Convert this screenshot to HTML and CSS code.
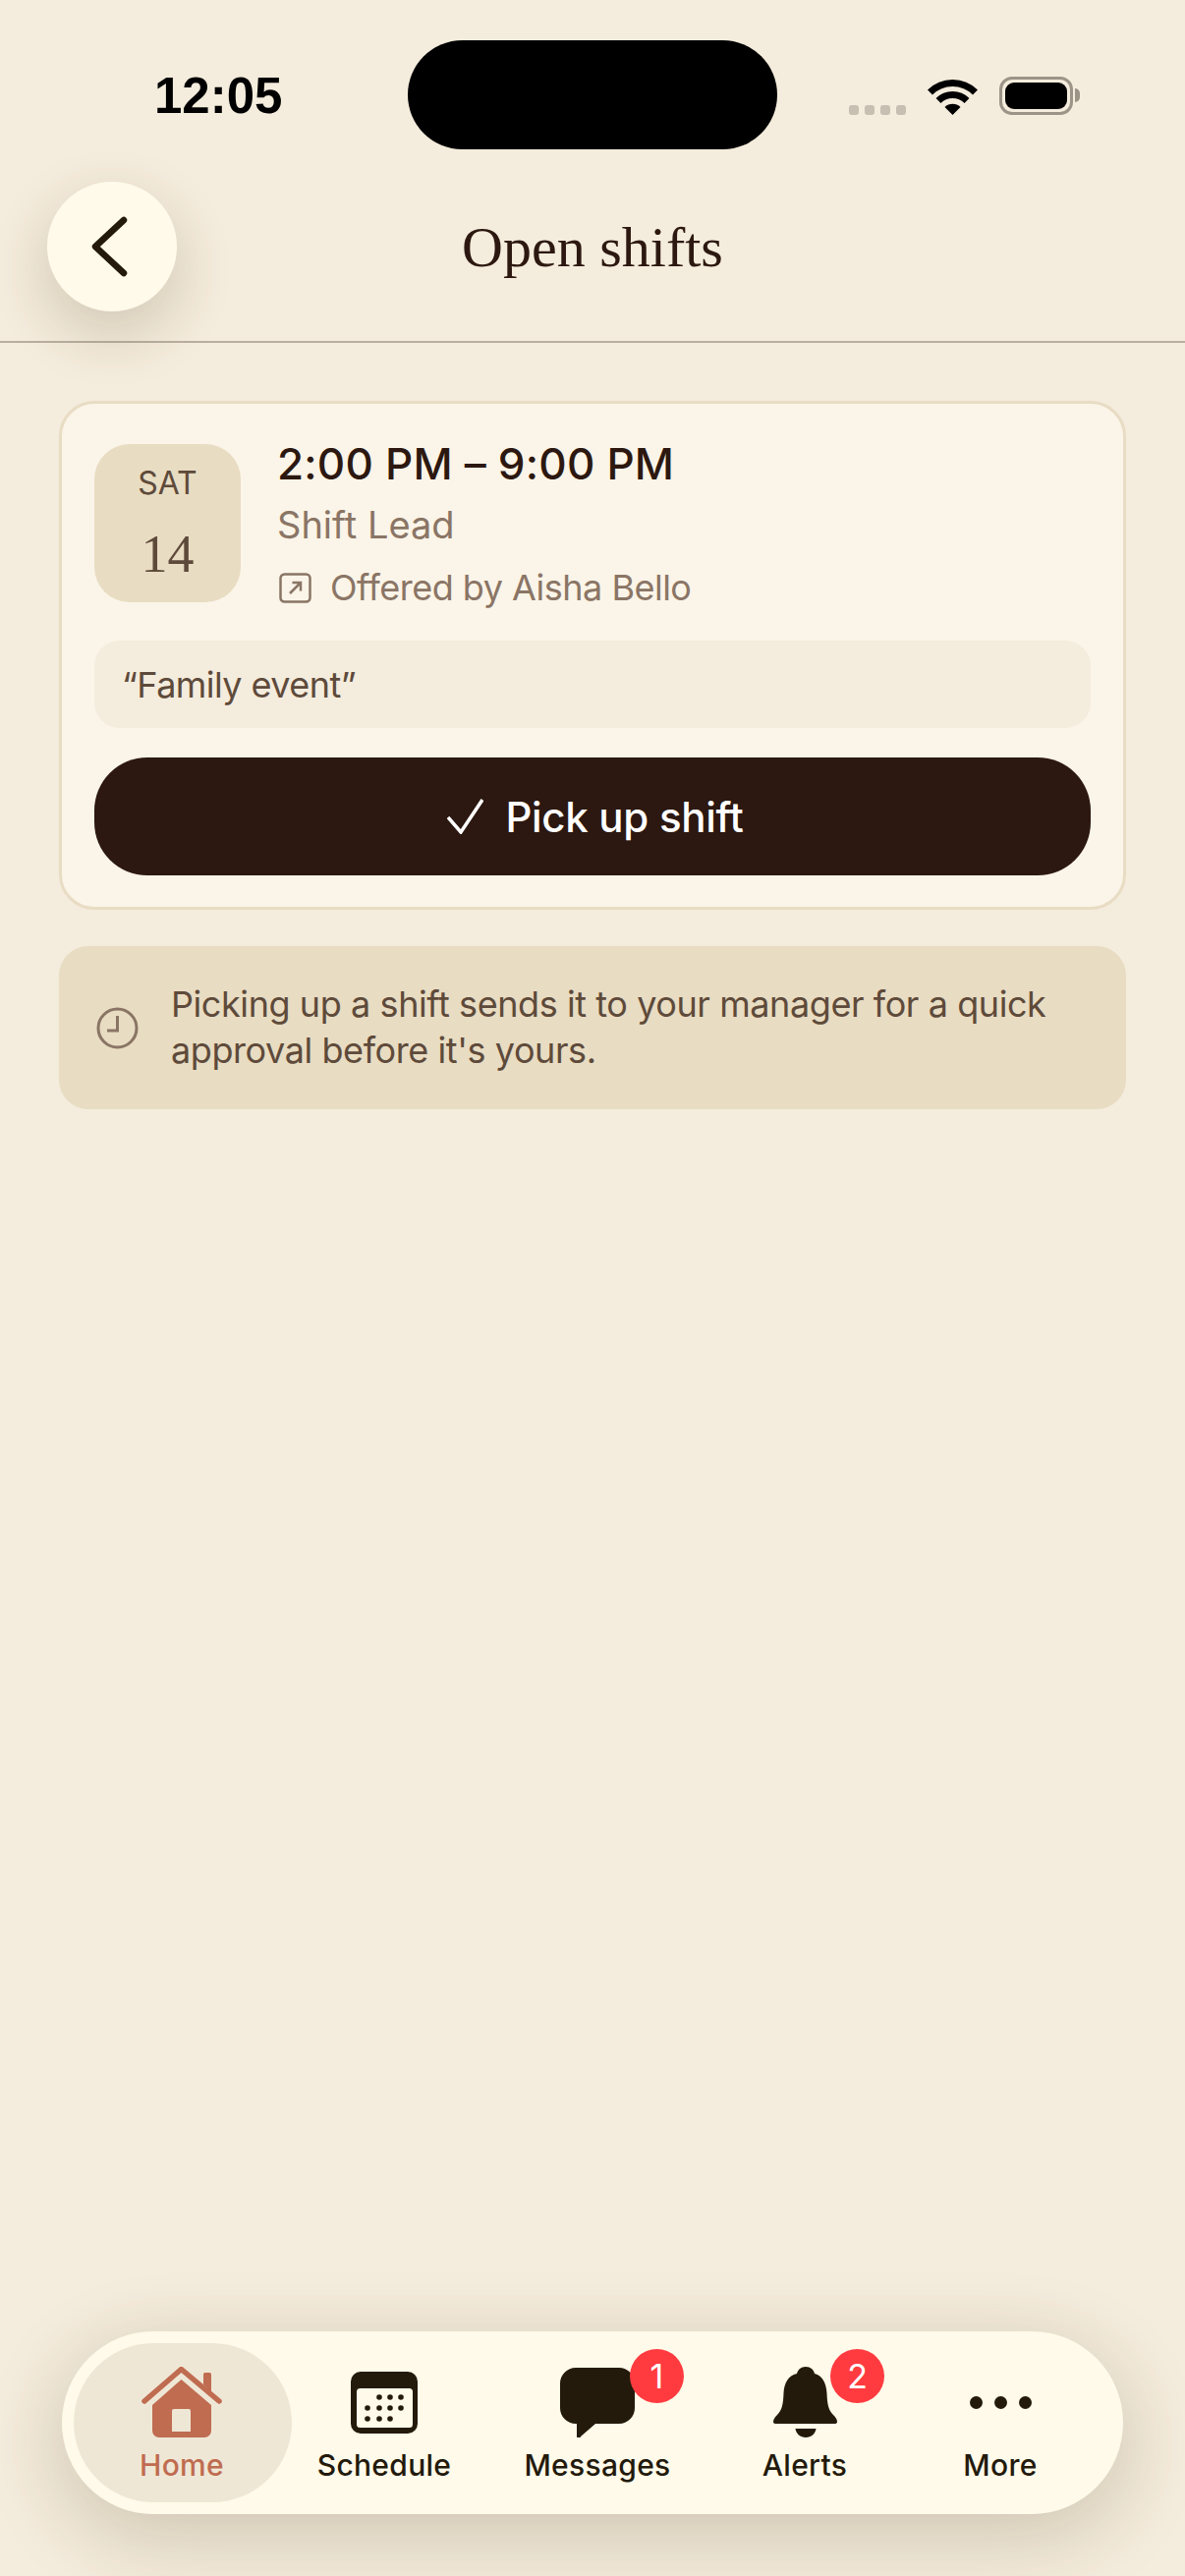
FILE: index.html
```html
<!DOCTYPE html>
<html lang="en">
<head>
    <meta charset="UTF-8">
    <meta name="viewport" content="width=device-width, initial-scale=1.0">
    <title>Open shifts</title>
    <link rel="stylesheet" href="styles.css">
</head>
<body>
    <div class="island"></div>

    <!-- Status bar -->
    <div class="status-bar">
        <span class="clock">12:05</span>
        <div class="status-icons">
            <div class="signal"><i></i><i></i><i></i><i></i></div>
            <svg class="wifi" width="51" height="37" viewBox="0 0 51 37">
                <path d="M2.5 14 A32.5 32.5 0 0 1 48.5 14" fill="none" stroke="#000" stroke-width="7"/>
                <path d="M11 22.5 A20.5 20.5 0 0 1 40 22.5" fill="none" stroke="#000" stroke-width="7"/>
                <path d="M25.5 37 L17.5 29 A11.5 11.5 0 0 1 33.5 29 Z" fill="#000"/>
            </svg>
            <div class="battery"><div class="battery-fill"></div></div>
        </div>
    </div>

    <!-- Header -->
    <header class="header">
        <button class="back-btn" aria-label="Back">
            <svg width="44" height="64" viewBox="0 0 44 64">
                <polyline points="34,5 5,32 34,59" fill="none" stroke="#231a0c" stroke-width="6.5" stroke-linecap="round" stroke-linejoin="round"/>
            </svg>
        </button>
        <h1>Open shifts</h1>
    </header>

    <main class="content">
        <section class="shift-card">
            <div class="shift-top">
                <div class="date-box">
                    <span class="date-day">SAT</span>
                    <span class="date-num">14</span>
                </div>
                <div class="shift-info">
                    <div class="shift-time">2:00 PM – 9:00 PM</div>
                    <div class="shift-role">Shift Lead</div>
                    <div class="shift-offer">
                        <svg width="33" height="31" viewBox="0 0 33 31">
                            <rect x="1.5" y="1.5" width="30" height="28" rx="4" fill="none" stroke="#8a7565" stroke-width="2.5"/>
                            <path d="M11 21 L22 10 M13.5 10 H22 V18.5" fill="none" stroke="#8a7565" stroke-width="2.5"/>
                        </svg>
                        <span>Offered by Aisha Bello</span>
                    </div>
                </div>
            </div>
            <div class="shift-note">“Family event”</div>
            <button class="pickup-btn">
                <svg width="37" height="36" viewBox="0 0 37 36">
                    <polyline points="1,19 14,34 36,1" fill="none" stroke="#fff" stroke-width="3.5"/>
                </svg>
                <span>Pick up shift</span>
            </button>
        </section>

        <section class="info-box">
            <svg class="info-icon" width="43" height="43" viewBox="0 0 43 43">
                <circle cx="21.5" cy="21.5" r="19.5" fill="none" stroke="#8a7565" stroke-width="3"/>
                <path d="M21.5 9 V24 H11" fill="none" stroke="#8a7565" stroke-width="3"/>
            </svg>
            <p>Picking up a shift sends it to your manager for a quick approval before it's yours.</p>
        </section>
    </main>

    <!-- Tab bar -->
    <nav class="tab-bar">
        <div class="tab active">
            <div class="tab-icon">
                <svg width="82" height="72" viewBox="0 0 82 72">
                    <path d="M63 7.5 a1.5 1.5 0 0 1 1.5 -1.5 h5 a1.5 1.5 0 0 1 1.5 1.5 V26 L63 18 Z" fill="#bf6c50"/>
                    <path d="M3 35 L40.5 2.5 L79 35" fill="none" stroke="#bf6c50" stroke-width="5.5" stroke-linecap="round" stroke-linejoin="round"/>
                    <path d="M40.5 13 L71 39 V65 a7 7 0 0 1 -7 7 H18 a7 7 0 0 1 -7 -7 V39 Z" fill="#bf6c50"/>
                    <path d="M31 45 a2 2 0 0 1 2 -2 h15 a2 2 0 0 1 2 2 V66 H31 Z" fill="#efe7d6"/>
                </svg>
            </div>
            <span class="tab-label">Home</span>
        </div>
        <div class="tab">
            <div class="tab-icon">
                <svg width="68" height="63" viewBox="0 0 68 63">
                    <rect width="68" height="63" rx="10" fill="#231a0c"/>
                    <rect x="6" y="17" width="57" height="40" rx="3.5" fill="#fffaea"/>
                    <g fill="#231a0c">
                        <circle cx="29" cy="26" r="2.8"/><circle cx="40" cy="26" r="2.8"/><circle cx="51" cy="26" r="2.8"/>
                        <circle cx="17" cy="37" r="2.8"/><circle cx="29" cy="37" r="2.8"/><circle cx="40" cy="37" r="2.8"/><circle cx="51" cy="37" r="2.8"/>
                        <circle cx="17" cy="48" r="2.8"/><circle cx="29" cy="48" r="2.8"/><circle cx="40" cy="48" r="2.8"/>
                    </g>
                </svg>
            </div>
            <span class="tab-label">Schedule</span>
        </div>
        <div class="tab">
            <div class="tab-icon">
                <svg width="76" height="71" viewBox="0 0 76 71">
                    <path d="M16 0 H60 a16 16 0 0 1 16 16 V41 a16 16 0 0 1 -16 16 H36 L21 70 a2 2 0 0 1 -4 -1 V57 H16 a16 16 0 0 1 -16 -16 V16 a16 16 0 0 1 16 -16 Z" fill="#231a0c"/>
                </svg>
            </div>
            <span class="tab-label">Messages</span>
            <span class="badge badge-messages">1</span>
        </div>
        <div class="tab">
            <div class="tab-icon">
                <svg width="65" height="72" viewBox="0 0 65 72">
                    <path d="M33 0 C28 0 25 3 24 7 C15 9 11 17 10.5 27 C10 38 9 44 4 49 C1 52 0 54 0 56 C0 57.5 1 58 3 58 H62 C64 58 65 57.5 65 56 C65 54 64 52 61 49 C56 44 55 38 54.5 27 C54 17 50 9 42 7 C41 3 38 0 33 0 Z" fill="#231a0c"/>
                    <path d="M22.5 63 H43.5 C43 68 38.5 72 33 72 C27.5 72 23 68 22.5 63 Z" fill="#231a0c"/>
                </svg>
            </div>
            <span class="tab-label">Alerts</span>
            <span class="badge badge-alerts">2</span>
        </div>
        <div class="tab">
            <div class="tab-icon">
                <svg width="63" height="15" viewBox="0 0 63 15">
                    <circle cx="6.5" cy="7.5" r="6.5" fill="#231a0c"/>
                    <circle cx="31.5" cy="7.5" r="6.5" fill="#231a0c"/>
                    <circle cx="56.5" cy="7.5" r="6.5" fill="#231a0c"/>
                </svg>
            </div>
            <span class="tab-label">More</span>
        </div>
    </nav>
</body>
</html>
```

FILE: styles.css
```css
/* Global Styles */
* {
    box-sizing: border-box;
}

body {
    margin: 0;
    width: 1206px;
    height: 2622px;
    overflow: hidden;
    position: relative;
    display: flex;
    flex-direction: column;
    background-color: #f4ecdc;
    font-family: Inter, "Noto Sans", sans-serif;
    color: #2c1810;
}

/* Status Bar */
.island {
    position: absolute;
    left: 415px;
    top: 41px;
    width: 376px;
    height: 111px;
    border-radius: 56px;
    background-color: #000;
}

.status-bar {
    height: 156px;
    padding: 69px 114px 0 157px;
    display: flex;
    justify-content: space-between;
    align-items: flex-start;
}

.clock {
    font-family: "Liberation Sans", sans-serif;
    font-weight: 700;
    font-size: 51px;
    line-height: 58px;
    color: #000;
}

.status-icons {
    display: flex;
    align-items: flex-end;
    margin-top: 9px;
}

.signal {
    display: flex;
    gap: 6px;
    margin-right: 22px;
}

.signal i {
    width: 10px;
    height: 10px;
    border-radius: 3px;
    background-color: #c6bfb2;
}

.battery {
    width: 75px;
    height: 39px;
    margin-left: 22px;
    padding: 3px;
    border: 3px solid #9b9487;
    border-radius: 13px;
    position: relative;
}

.battery::after {
    content: "";
    position: absolute;
    right: -10px;
    top: 9px;
    width: 5px;
    height: 14px;
    border-radius: 0 5px 5px 0;
    background-color: #9b9487;
}

.battery-fill {
    width: 100%;
    height: 100%;
    border-radius: 9px;
    background-color: #000;
}

/* Header */
.header {
    height: 193px;
    padding-left: 48px;
    padding-bottom: 1px;
    display: flex;
    align-items: center;
    position: relative;
    border-bottom: 2px solid #b9afa0;
}

.back-btn {
    width: 132px;
    height: 132px;
    padding: 0;
    border: none;
    border-radius: 50%;
    background-color: #fffaea;
    box-shadow: 0 22px 60px rgba(70, 50, 25, 0.2);
    display: flex;
    align-items: center;
    justify-content: center;
}

.header h1 {
    margin: 0;
    position: absolute;
    left: 0;
    right: 0;
    top: 60px;
    text-align: center;
    font-family: "Liberation Serif", serif;
    font-weight: 400;
    font-size: 58px;
    line-height: 72px;
    color: #2c1810;
}

/* Content */
.content {
    flex: 1;
    padding: 59px 60px 0;
}

.shift-card {
    height: 518px;
    padding: 41px 33px 0;
    border: 3px solid #e8dcc4;
    border-radius: 36px;
    background-color: #fbf4e8;
}

.shift-top {
    height: 161px;
    display: flex;
    gap: 37px;
}

.date-box {
    width: 149px;
    height: 161px;
    border-radius: 36px;
    background-color: #e8dcc2;
    display: flex;
    flex-direction: column;
    align-items: center;
    padding-top: 18px;
}

.date-day {
    font-size: 32px;
    line-height: 44px;
    color: #5e4a3a;
}

.date-num {
    margin-top: 14px;
    font-family: "Liberation Serif", serif;
    font-size: 54px;
    line-height: 72px;
    color: #5e4a3a;
}

.shift-info {
    display: flex;
    flex-direction: column;
    margin-top: -5px;
}

.shift-time {
    font-size: 44px;
    font-weight: 500;
    line-height: 50px;
    letter-spacing: 0.2px;
    color: #2c1810;
}

.shift-role {
    font-size: 38px;
    line-height: 46px;
    margin-top: 14px;
    color: #8a7565;
}

.shift-offer {
    display: flex;
    align-items: center;
    gap: 19px;
    margin-top: 19px;
    font-size: 36px;
    line-height: 44px;
    letter-spacing: -0.5px;
    color: #8a7565;
}

.shift-offer svg {
    margin-left: 2px;
}

.shift-note {
    height: 89px;
    margin-top: 39px;
    padding-left: 28px;
    display: flex;
    align-items: center;
    border-radius: 26px;
    background-color: #f4ecdd;
    font-size: 36px;
    letter-spacing: -0.55px;
    color: #5e4a3a;
}

.pickup-btn {
    width: 100%;
    height: 120px;
    margin-top: 30px;
    padding: 0 0 0 6px;
    border: none;
    border-radius: 54px;
    background-color: #2c1810;
    color: #fff;
    display: flex;
    align-items: center;
    justify-content: center;
    gap: 22px;
    font-family: inherit;
    font-size: 42px;
    font-weight: 500;
    letter-spacing: -0.3px;
}

.info-box {
    height: 166px;
    margin-top: 37px;
    padding-left: 38px;
    padding-right: 40px;
    display: flex;
    align-items: center;
    gap: 33px;
    border-radius: 30px;
    background-color: #e8dcc2;
}

.info-icon {
    flex-shrink: 0;
}

.info-box p {
    margin: 0;
    font-size: 36px;
    line-height: 47px;
    letter-spacing: -0.42px;
    color: #5e4a3a;
}

/* Tab Bar */
.tab-bar {
    height: 186px;
    margin: 0 63px 63px;
    padding: 12px 14px 12px 12px;
    display: grid;
    grid-template-columns: 222px 188px 246px 176px 222px;
    border-radius: 93px;
    background-color: #fffaea;
    box-shadow: 0 20px 80px rgba(70, 50, 25, 0.22);
}

.tab {
    position: relative;
    padding-top: 24px;
    display: flex;
    flex-direction: column;
    align-items: center;
}

.tab.active {
    padding-right: 2px;
    border-radius: 81px;
    background-color: #efe7d6;
}

.tab-icon {
    height: 72px;
    display: flex;
    align-items: center;
    justify-content: center;
}

.tab-label {
    margin-top: 10px;
    font-size: 30px;
    font-weight: 450;
    line-height: 36px;
    letter-spacing: 0.3px;
    color: #231a0c;
}

.tab.active .tab-label {
    font-weight: 500;
    color: #bf6c50;
}

.badge {
    position: absolute;
    top: 6px;
    width: 55px;
    height: 55px;
    border-radius: 50%;
    background-color: #ff3b40;
    color: #fff;
    font-size: 34px;
    line-height: 55px;
    text-align: center;
}

.badge-messages {
    left: 156px;
}

.badge-alerts {
    left: 114px;
}
```
